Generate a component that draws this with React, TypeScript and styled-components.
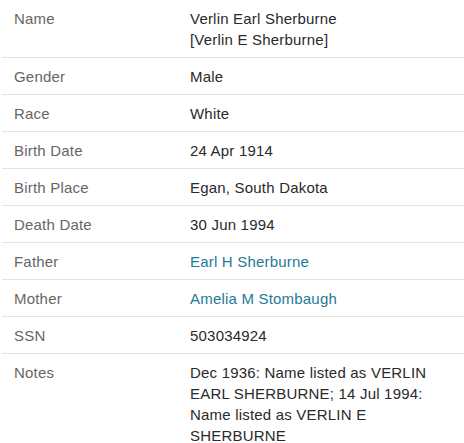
import React from "react";
import styled, { createGlobalStyle } from "styled-components";

const Global = createGlobalStyle`
  html, body { margin: 0; padding: 0; background: #fff; }
  body { font-family: "Liberation Sans", Arial, sans-serif; }
`;

const Table = styled.div`
  width: 462px;
  margin-left: 2px;
  display: flex;
  flex-direction: column;
`;

const Row = styled.div`
  display: grid;
  grid-template-columns: 188px 1fr;
  padding: 8px 0 7px;
  border-bottom: 1px solid #e3e3e3;
  font-size: 15px;
  line-height: 21px;
  letter-spacing: 0.2px;
`;

const Label = styled.div`
  padding-left: 12px;
  color: #666;
`;

const Value = styled.div`
  color: #2a2a2a;
  padding-right: 20px;
`;

const Link = styled.a`
  color: #237a98;
  text-decoration: none;
`;

type Item = { label: string; value: React.ReactNode };

const items: Item[] = [
  { label: "Name", value: (<>Verlin Earl Sherburne<br />[Verlin E Sherburne]</>) },
  { label: "Gender", value: "Male" },
  { label: "Race", value: "White" },
  { label: "Birth Date", value: "24 Apr 1914" },
  { label: "Birth Place", value: "Egan, South Dakota" },
  { label: "Death Date", value: "30 Jun 1994" },
  { label: "Father", value: <Link href="#">Earl H Sherburne</Link> },
  { label: "Mother", value: <Link href="#">Amelia M Stombaugh</Link> },
  { label: "SSN", value: "503034924" },
  {
    label: "Notes",
    value:
      "Dec 1936: Name listed as VERLIN EARL SHERBURNE; 14 Jul 1994: Name listed as VERLIN E SHERBURNE",
  },
];

export default function App() {
  return (
    <>
      <Global />
      <Table>
        {items.map((it) => (
          <Row key={it.label}>
            <Label>{it.label}</Label>
            <Value>{it.value}</Value>
          </Row>
        ))}
      </Table>
    </>
  );
}
